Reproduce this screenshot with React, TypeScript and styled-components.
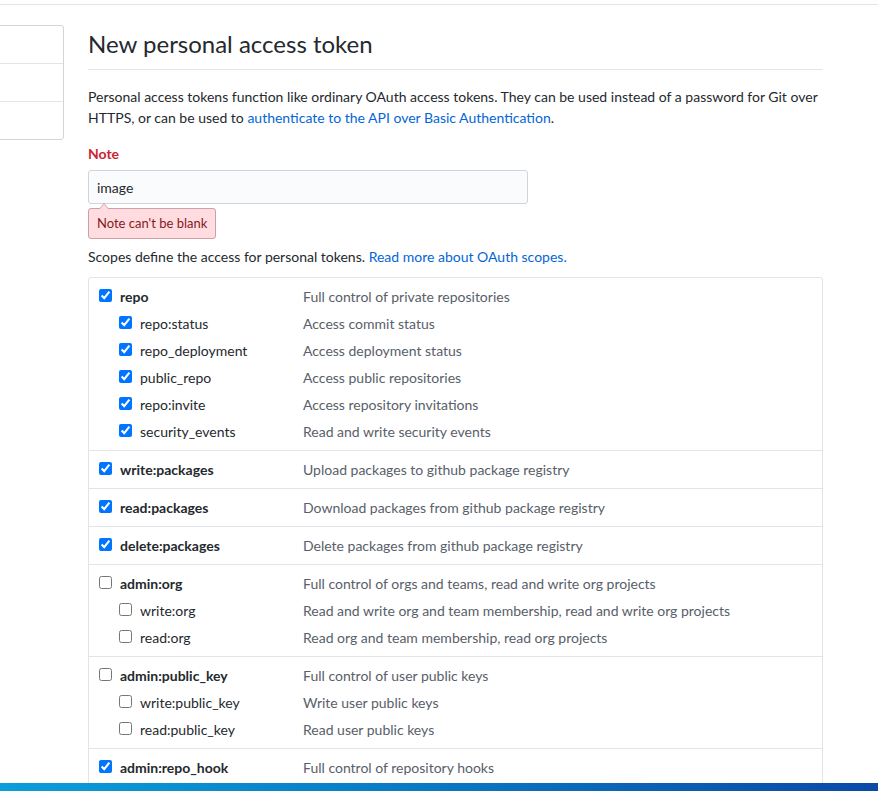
import React from "react";
import styled, { createGlobalStyle } from "styled-components";

const GlobalStyle = createGlobalStyle`
  html, body { margin: 0; padding: 0; background: #fff; }
  body {
    font-family: Lato, "Noto Sans", sans-serif;
    font-size: 14px;
    line-height: 1.5;
    color: #24292e;
    overflow-x: hidden;
  }
  * { box-sizing: border-box; }
`;

const TopBar = styled.div`
  height: 5px;
  border-bottom: 1px solid #e1e4e8;
`;

const Layout = styled.div`
  display: flex;
  align-items: flex-start;
  gap: 24px;
  padding-top: 20px;
`;

const SideNav = styled.nav`
  flex: none;
  width: 200px;
  margin-left: -136px;
  border: 1px solid #d1d5da;
  border-radius: 3px;
`;

const SideItem = styled.div`
  height: 37px;
  & + & {
    height: 38px;
    border-top: 1px solid #e1e4e8;
  }
`;

const Main = styled.main`
  flex: none;
  width: 735px;
  padding-top: 4px;
`;

const Subhead = styled.h1`
  margin: 0;
  font-size: 24px;
  font-weight: 400;
  line-height: 30px;
  padding-bottom: 10px;
  border-bottom: 1px solid #e1e4e8;
`;

const Intro = styled.p`
  margin: 16px 0 0;
  line-height: 21px;
`;

const Link = styled.a`
  color: #0366d6;
  text-decoration: none;
`;

const FormGroup = styled.div`
  margin-top: 15px;
`;

const Label = styled.label<{ $error?: boolean }>`
  display: block;
  font-weight: 700;
  line-height: 21px;
  color: ${(p) => (p.$error ? "#cb2431" : "#24292e")};
`;

const Input = styled.input`
  display: block;
  margin-top: 6px;
  width: 440px;
  height: 34px;
  padding: 0 8px;
  font-family: inherit;
  font-size: 14px;
  color: #24292e;
  background: #fafbfc;
  border: 1px solid #d1d5da;
  border-radius: 3px;
  outline: none;
`;

const ErrorBox = styled.div`
  position: relative;
  display: inline-block;
  margin-top: 4px;
  padding: 5px 8px;
  font-size: 13px;
  line-height: 19px;
  color: #86181d;
  background: #ffdce0;
  border: 1px solid #cea0a5;
  border-radius: 3px;
  &::before,
  &::after {
    content: "";
    position: absolute;
    left: 10px;
    border: 5px solid transparent;
    border-top: 0;
  }
  &::before {
    top: -6px;
    border-bottom: 6px solid #cea0a5;
  }
  &::after {
    top: -5px;
    border-bottom: 6px solid #ffdce0;
  }
`;

const ScopesNote = styled.p`
  margin: 7px 0 0;
  line-height: 21px;
`;

const ScopeList = styled.ul`
  list-style: none;
  margin: 10px 0 0;
  padding: 0;
  border: 1px solid #e1e4e8;
  border-radius: 3px;
`;

const ScopeGroup = styled.li`
  padding: 5px 10px;
  & + & {
    border-top: 1px solid #e1e4e8;
  }
`;

const ScopeRow = styled.div`
  display: grid;
  grid-template-columns: 204px 1fr;
  height: 27px;
  line-height: 27px;
`;

const ScopeName = styled.label<{ $nested?: boolean }>`
  display: flex;
  align-items: center;
  gap: 8px;
  padding-left: ${(p) => (p.$nested ? "20px" : "0")};
  font-weight: ${(p) => (p.$nested ? 400 : 700)};
  white-space: nowrap;
`;

const Check = styled.input`
  flex: none;
  width: 13px;
  height: 13px;
  margin: -3px 0 0;
  accent-color: #0075ff;
`;

const ScopeDesc = styled.span`
  color: #586069;
  white-space: nowrap;
`;

const Taskbar = styled.div`
  position: fixed;
  left: 0;
  right: 0;
  bottom: 0;
  height: 8px;
  background: linear-gradient(90deg, #0b9ed8 0%, #0a7cc4 45%, #0a4aa6 100%);
`;

type Scope = { name: string; desc: string; checked: boolean };
type Group = { main: Scope; subs: Scope[] };

const groups: Group[] = [
  {
    main: { name: "repo", desc: "Full control of private repositories", checked: true },
    subs: [
      { name: "repo:status", desc: "Access commit status", checked: true },
      { name: "repo_deployment", desc: "Access deployment status", checked: true },
      { name: "public_repo", desc: "Access public repositories", checked: true },
      { name: "repo:invite", desc: "Access repository invitations", checked: true },
      { name: "security_events", desc: "Read and write security events", checked: true },
    ],
  },
  {
    main: { name: "write:packages", desc: "Upload packages to github package registry", checked: true },
    subs: [],
  },
  {
    main: { name: "read:packages", desc: "Download packages from github package registry", checked: true },
    subs: [],
  },
  {
    main: { name: "delete:packages", desc: "Delete packages from github package registry", checked: true },
    subs: [],
  },
  {
    main: { name: "admin:org", desc: "Full control of orgs and teams, read and write org projects", checked: false },
    subs: [
      { name: "write:org", desc: "Read and write org and team membership, read and write org projects", checked: false },
      { name: "read:org", desc: "Read org and team membership, read org projects", checked: false },
    ],
  },
  {
    main: { name: "admin:public_key", desc: "Full control of user public keys", checked: false },
    subs: [
      { name: "write:public_key", desc: "Write user public keys", checked: false },
      { name: "read:public_key", desc: "Read user public keys", checked: false },
    ],
  },
  {
    main: { name: "admin:repo_hook", desc: "Full control of repository hooks", checked: true },
    subs: [],
  },
];

function Row({ scope, nested }: { scope: Scope; nested?: boolean }) {
  return (
    <ScopeRow>
      <ScopeName $nested={nested}>
        <Check type="checkbox" defaultChecked={scope.checked} />
        {scope.name}
      </ScopeName>
      <ScopeDesc>{scope.desc}</ScopeDesc>
    </ScopeRow>
  );
}

export default function App() {
  return (
    <>
      <GlobalStyle />
      <TopBar />
      <Layout>
        <SideNav>
          <SideItem />
          <SideItem />
          <SideItem />
        </SideNav>
        <Main>
          <Subhead>New personal access token</Subhead>
          <Intro>
            Personal access tokens function like ordinary OAuth access tokens. They can be used instead of a
            password for Git over HTTPS, or can be used to{" "}
            <Link href="#">authenticate to the API over Basic Authentication</Link>.
          </Intro>
          <FormGroup>
            <Label $error htmlFor="note">Note</Label>
            <Input id="note" defaultValue="image" />
            <ErrorBox>Note can't be blank</ErrorBox>
          </FormGroup>
          <ScopesNote>
            Scopes define the access for personal tokens. <Link href="#">Read more about OAuth scopes.</Link>
          </ScopesNote>
          <ScopeList>
            {groups.map((g) => (
              <ScopeGroup key={g.main.name}>
                <Row scope={g.main} />
                {g.subs.map((s) => (
                  <Row key={s.name} scope={s} nested />
                ))}
              </ScopeGroup>
            ))}
          </ScopeList>
        </Main>
      </Layout>
      <Taskbar />
    </>
  );
}
